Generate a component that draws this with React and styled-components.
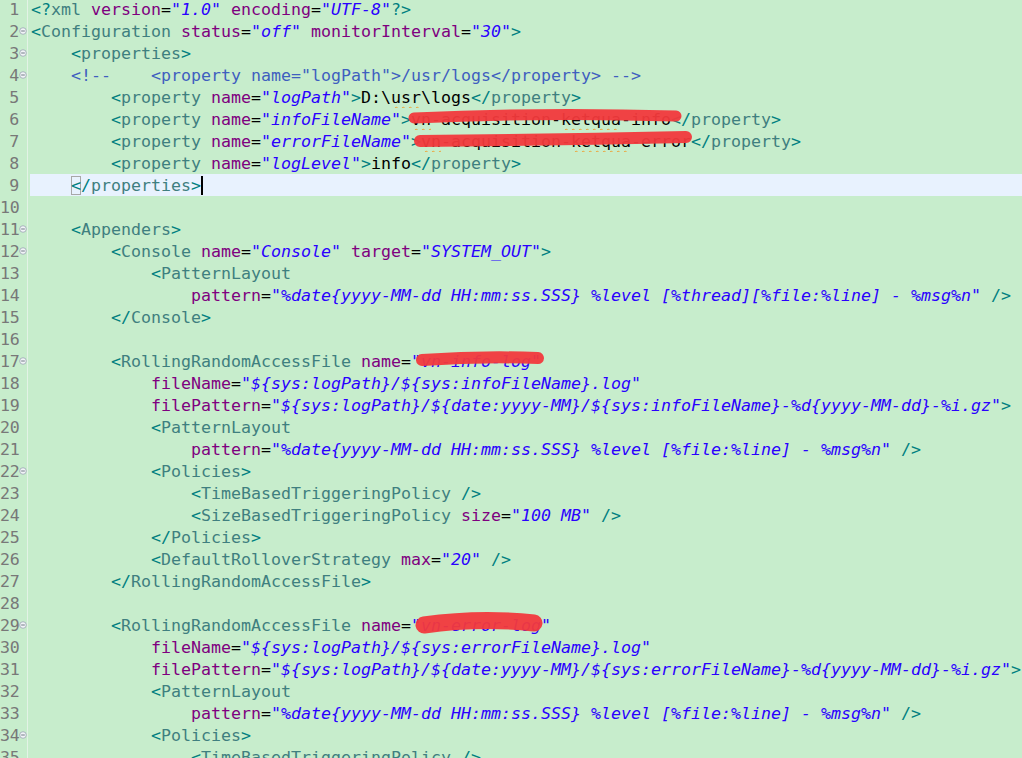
import React from 'react';
import styled, { createGlobalStyle } from 'styled-components';

const GlobalStyle = createGlobalStyle`
  html, body {
    margin: 0;
    padding: 0;
    background: #c7edcc;
    overflow: hidden;
  }
  #root {
    width: 1022px;
    height: 758px;
    overflow: hidden;
  }
`;

const source = [
  '<?xml version="1.0" encoding="UTF-8"?>',
  '<Configuration status="off" monitorInterval="30">',
  '    <properties>',
  '    <!--    <property name="logPath">/usr/logs</property> -->',
  '        <property name="logPath">D:\\usr\\logs</property>',
  '        <property name="infoFileName">vn-acquisition-ketqua-info</property>',
  '        <property name="errorFileName">vn-acquisition-ketqua-error</property>',
  '        <property name="logLevel">info</property>',
  '    </properties>',
  '',
  '    <Appenders>',
  '        <Console name="Console" target="SYSTEM_OUT">',
  '            <PatternLayout',
  '                pattern="%date{yyyy-MM-dd HH:mm:ss.SSS} %level [%thread][%file:%line] - %msg%n" />',
  '        </Console>',
  '',
  '        <RollingRandomAccessFile name="vn-info-log"',
  '            fileName="${sys:logPath}/${sys:infoFileName}.log"',
  '            filePattern="${sys:logPath}/${date:yyyy-MM}/${sys:infoFileName}-%d{yyyy-MM-dd}-%i.gz">',
  '            <PatternLayout',
  '                pattern="%date{yyyy-MM-dd HH:mm:ss.SSS} %level [%file:%line] - %msg%n" />',
  '            <Policies>',
  '                <TimeBasedTriggeringPolicy />',
  '                <SizeBasedTriggeringPolicy size="100 MB" />',
  '            </Policies>',
  '            <DefaultRolloverStrategy max="20" />',
  '        </RollingRandomAccessFile>',
  '',
  '        <RollingRandomAccessFile name="vn-error-log"',
  '            fileName="${sys:logPath}/${sys:errorFileName}.log"',
  '            filePattern="${sys:logPath}/${date:yyyy-MM}/${sys:errorFileName}-%d{yyyy-MM-dd}-%i.gz">',
  '            <PatternLayout',
  '                pattern="%date{yyyy-MM-dd HH:mm:ss.SSS} %level [%file:%line] - %msg%n" />',
  '            <Policies>',
  '                <TimeBasedTriggeringPolicy />',
].join('\n');

const foldLines = [2, 3, 4, 11, 12, 17, 22, 29, 34];
const activeLine = 9;

// red marker strokes drawn over the hidden names
const scribbles = {
  6: { d: 'M414 10 Q 540 4 676 8', w: 11 },
  7: { d: 'M420 11 Q 552 10 686 7', w: 12 },
  17: { d: 'M422 10 Q 480 6 538 8', w: 12 },
  29: { d: 'M424 11 Q 480 3 534 9', w: 17 },
};

function tokenize(src) {
  const out = [];
  let i = 0;
  let inTag = false;
  while (i < src.length) {
    const rest = src.slice(i);
    let m;
    if (!inTag) {
      if (rest.startsWith('<!--')) {
        const end = rest.indexOf('-->') + 3;
        out.push({ t: rest.slice(0, end), type: 'comment' });
        i += end;
      } else if ((m = rest.match(/^(<\?|<\/|<)([\w:]+)/))) {
        out.push({ t: m[1], type: 'bracket' });
        out.push({ t: m[2], type: 'tag' });
        i += m[0].length;
        inTag = true;
      } else {
        m = rest.match(/^[^<]+/);
        out.push({ t: m[0], type: 'text' });
        i += m[0].length;
      }
    } else if ((m = rest.match(/^(\?>|\/>|>)/))) {
      out.push({ t: m[0], type: 'bracket' });
      i += m[0].length;
      inTag = false;
    } else if ((m = rest.match(/^\s+/))) {
      out.push({ t: m[0], type: 'text' });
      i += m[0].length;
    } else if ((m = rest.match(/^[\w:.-]+/))) {
      out.push({ t: m[0], type: 'attr' });
      i += m[0].length;
    } else if ((m = rest.match(/^"[^"]*"/))) {
      out.push({ t: m[0], type: 'value' });
      i += m[0].length;
    } else {
      out.push({ t: rest[0], type: 'text' });
      i += 1;
    }
  }
  // split into lines
  const lines = [[]];
  out.forEach((tok) => {
    const parts = tok.t.split('\n');
    parts.forEach((p, k) => {
      if (k > 0) lines.push([]);
      if (p) lines[lines.length - 1].push({ t: p, type: tok.type });
    });
  });
  return lines;
}

const colors = {
  bracket: '#008080',
  tag: '#3f7f7f',
  attr: '#7f007f',
  value: '#2a00ff',
  comment: '#3f5fbf',
  text: '#000000',
};

const Editor = styled.div`
  margin-top: -2px;
  display: flex;
  flex-direction: column;
  font-family: "DejaVu Sans Mono", "Liberation Mono", monospace;
  font-size: 16.61px;
  line-height: 22px;
`;

const Row = styled.div`
  position: relative;
  display: flex;
  height: 22px;
`;

const Gutter = styled.div`
  flex: none;
  display: flex;
  width: 27px;
  border-right: 1px solid #e3f3e6;
`;

const LineNo = styled.span`
  width: 19px;
  padding-top: 1px;
  text-align: right;
  color: #787878;
  white-space: pre;
  letter-spacing: -0.3px;
`;

const Fold = styled.span`
  width: 8px;
  display: flex;
  align-items: center;
  justify-content: center;
`;

const Code = styled.div`
  flex: 1;
  margin-left: 2px;
  padding-left: 1px;
  padding-top: 1px;
  line-height: 21px;
  white-space: pre;
  overflow: hidden;
  background: ${(p) => (p.$active ? '#e8f2fe' : 'transparent')};
`;

const Tok = styled.span`
  color: ${(p) => colors[p.$type]};
  font-style: ${(p) => (p.$type === 'value' ? 'italic' : 'normal')};
`;

const Misspelled = styled.span`
  text-decoration: underline wavy #f0a030;
  text-decoration-thickness: 1px;
  text-underline-offset: 3px;
`;

const MatchBox = styled.span`
  box-shadow: inset 0 0 0 1px #a8a8a8;
`;

const Caret = styled.span`
  display: inline-block;
  width: 2px;
  height: 19px;
  background: #000;
  vertical-align: -4px;
`;

const Scribble = styled.svg`
  position: absolute;
  left: 0;
  top: 0;
  width: 1022px;
  height: 22px;
  overflow: visible;
  pointer-events: none;
`;

const FoldIcon = () => (
  <svg width="8" height="8" viewBox="0 0 8 8">
    <circle cx="4" cy="4" r="3.3" fill="#f1f4f7" stroke="#a3adb8" strokeWidth="0.9" />
    <line x1="2.2" y1="4" x2="5.8" y2="4" stroke="#707a86" strokeWidth="1" />
  </svg>
);

function renderText(t, key) {
  const parts = t.split(/(usr|vn|ketqua)/);
  return parts.map((p, k) =>
    /^(usr|vn|ketqua)$/.test(p) ? (
      <Misspelled key={`${key}-${k}`}>{p}</Misspelled>
    ) : (
      <React.Fragment key={`${key}-${k}`}>{p}</React.Fragment>
    )
  );
}

const lines = tokenize(source);

const App = () => (
  <>
    <GlobalStyle />
    <Editor>
      {lines.map((toks, idx) => {
        const n = idx + 1;
        const active = n === activeLine;
        const mark = scribbles[n];
        return (
          <Row key={n}>
            <Gutter>
              <LineNo>{n}</LineNo>
              <Fold>{foldLines.includes(n) && <FoldIcon />}</Fold>
            </Gutter>
            <Code $active={active}>
              {toks.map((tok, k) => {
                if (active && tok.type === 'bracket' && tok.t === '</') {
                  return (
                    <Tok key={k} $type="bracket">
                      <MatchBox>&lt;</MatchBox>/
                    </Tok>
                  );
                }
                return (
                  <Tok key={k} $type={tok.type}>
                    {tok.type === 'text' ? renderText(tok.t, k) : tok.t}
                  </Tok>
                );
              })}
              {active && <Caret />}
            </Code>
            {mark && (
              <Scribble>
                <path
                  d={mark.d}
                  fill="none"
                  stroke="#f2393c"
                  strokeWidth={mark.w}
                  strokeLinecap="round"
                  opacity="0.95"
                />
              </Scribble>
            )}
          </Row>
        );
      })}
    </Editor>
  </>
);

export default App;
